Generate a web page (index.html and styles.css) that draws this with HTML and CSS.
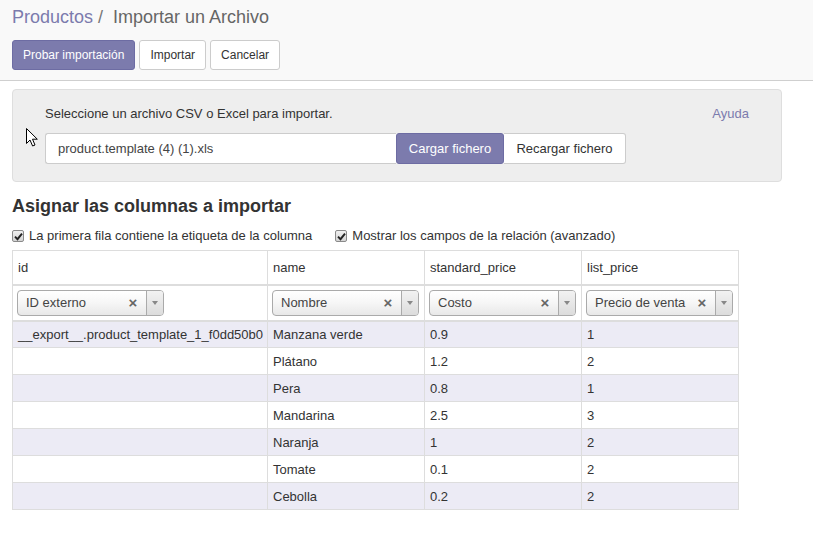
FILE: index.html
```html
<!DOCTYPE html>
<html lang="es">
<head>
<meta charset="utf-8">
<title>Importar un Archivo</title>
<link rel="stylesheet" href="styles.css">
</head>
<body>
<div class="control-panel">
  <div class="breadcrumb"><a class="crumb-link">Productos</a><span class="sep">/</span><span class="crumb-active">Importar un Archivo</span></div>
  <div class="cp-buttons">
    <button class="btn btn-primary">Probar importación</button>
    <button class="btn btn-default">Importar</button>
    <button class="btn btn-default">Cancelar</button>
  </div>
</div>

<div class="content">
  <div class="file-box">
    <svg class="cursor" width="14" height="21" viewBox="0 0 14 21"><path d="M1.5 1.5 L1.5 16.5 L5 13 L7.6 19 L10 18 L7.5 12.2 L12.3 12.2 Z" fill="#fff" stroke="#000" stroke-width="1" stroke-linejoin="miter"/></svg>
    <div class="file-top">
      <span class="file-label">Seleccione un archivo CSV o Excel para importar.</span>
      <a class="help">Ayuda</a>
    </div>
    <div class="file-row">
      <div class="file-input">product.template (4) (1).xls</div>
      <button class="btn btn-primary btn-load">Cargar fichero</button>
      <button class="btn btn-default btn-reload">Recargar fichero</button>
    </div>
  </div>

  <h2 class="title">Asignar las columnas a importar</h2>
  <div class="options">
    <label class="opt"><span class="chk"><svg width="9" height="9" viewBox="0 0 9 9"><path d="M1 4.6 L3.5 7.2 L8 1.6" fill="none" stroke="#222" stroke-width="1.9"/></svg></span>La primera fila contiene la etiqueta de la columna</label>
    <label class="opt opt2"><span class="chk"><svg width="9" height="9" viewBox="0 0 9 9"><path d="M1 4.6 L3.5 7.2 L8 1.6" fill="none" stroke="#222" stroke-width="1.9"/></svg></span>Mostrar los campos de la relación (avanzado)</label>
  </div>

  <table class="preview">
    <colgroup><col class="c1"><col class="c2"><col class="c2"><col class="c2"></colgroup>
    <thead>
      <tr class="names"><th>id</th><th>name</th><th>standard_price</th><th>list_price</th></tr>
      <tr class="fields">
        <th><div class="s2"><span class="s2-text">ID externo</span><span class="s2-x">×</span><span class="s2-arrow"><i></i></span></div></th>
        <th><div class="s2"><span class="s2-text">Nombre</span><span class="s2-x">×</span><span class="s2-arrow"><i></i></span></div></th>
        <th><div class="s2"><span class="s2-text">Costo</span><span class="s2-x">×</span><span class="s2-arrow"><i></i></span></div></th>
        <th><div class="s2"><span class="s2-text">Precio de venta</span><span class="s2-x">×</span><span class="s2-arrow"><i></i></span></div></th>
      </tr>
    </thead>
    <tbody>
      <tr><td>__export__.product_template_1_f0dd50b0</td><td>Manzana verde</td><td>0.9</td><td>1</td></tr>
      <tr><td></td><td>Plátano</td><td>1.2</td><td>2</td></tr>
      <tr><td></td><td>Pera</td><td>0.8</td><td>1</td></tr>
      <tr><td></td><td>Mandarina</td><td>2.5</td><td>3</td></tr>
      <tr><td></td><td>Naranja</td><td>1</td><td>2</td></tr>
      <tr><td></td><td>Tomate</td><td>0.1</td><td>2</td></tr>
      <tr><td></td><td>Cebolla</td><td>0.2</td><td>2</td></tr>
    </tbody>
  </table>
</div>
</body>
</html>
```

FILE: styles.css
```css
* { box-sizing: border-box; }
body {
  margin: 0;
  font-family: "Liberation Sans", Arial, sans-serif;
  font-size: 13px;
  color: #333;
  background: #fff;
}
.control-panel {
  background: #f9f9f9;
  border-bottom: 1px solid #cfcfcf;
  padding: 5px 12px 10px;
}
.breadcrumb {
  font-size: 18px;
  line-height: 25px;
  height: 25px;
}
.crumb-link { color: #7c7bad; }
.sep { color: #777; margin: 0 10px 0 5px; }
.crumb-active { color: #666; }
.cp-buttons {
  margin-top: 10px;
  display: flex;
  gap: 4px;
}
.btn {
  font-family: inherit;
  font-size: 12px;
  line-height: 18px;
  height: 30px;
  padding: 5px 10px;
  border: 1px solid #ccc;
  border-radius: 3px;
  background: #fff;
  color: #333;
  margin: 0;
}
.btn-primary {
  background: #7c7bad;
  border-color: #6d6ca3;
  color: #fff;
}
.content {
  padding: 8px 12px 0;
}
.file-box {
  position: relative;
  width: 770px;
  background: #eeeeee;
  border: 1px solid #dedede;
  border-radius: 4px;
  padding: 15px 32px 17px;
}
.cursor {
  position: absolute;
  left: 12px;
  top: 37px;
}
.file-top {
  display: flex;
  justify-content: space-between;
  line-height: 18px;
}
.help { color: #7c7bad; }
.file-row {
  margin-top: 10px;
  display: flex;
  height: 31px;
}
.file-input {
  width: 351px;
  height: 31px;
  background: #fff;
  border: 1px solid #ccc;
  border-right: none;
  border-radius: 3px 0 0 3px;
  padding: 0 12px;
  line-height: 29px;
  font-size: 13px;
  color: #444;
}
.btn-load {
  width: 108px;
  height: 31px;
  border-radius: 3px;
  padding: 0;
  font-size: 13px;
}
.btn-reload {
  width: 122px;
  height: 31px;
  padding: 0;
  border-radius: 0 3px 3px 0;
  border-left: none;
  font-size: 13px;
}
.title {
  margin: 13px 0 0;
  font-size: 18px;
  line-height: 22px;
  font-weight: bold;
  color: #333;
}
.options {
  margin-top: 10px;
  display: flex;
  line-height: 18px;
  height: 18px;
  color: #333;
}
.opt {
  display: flex;
  align-items: center;
}
.opt2 { margin-left: 23px; }
.chk {
  width: 12px;
  height: 12px;
  border: 1px solid #8a8a8a;
  border-radius: 2px;
  background: linear-gradient(#f0f0f0, #d4d4d4);
  display: inline-flex;
  align-items: center;
  justify-content: center;
  margin-right: 5px;
}
.chk svg { display: block; }
.preview {
  margin-top: 5px;
  width: 726px;
  table-layout: fixed;
  border-collapse: collapse;
  border: 1px solid #ddd;
}
.c1 { width: 255px; }
.c2 { width: 157px; }
.preview th, .preview td {
  border: 1px solid #ddd;
  padding: 0 5px;
  text-align: left;
  font-weight: normal;
  white-space: nowrap;
  overflow: hidden;
}
.preview thead th {
  border-bottom: 2px solid #ddd;
}
.names th { height: 34px; }
.fields th { height: 36px; padding: 0 4px; }
.preview td { height: 27px; }
.preview tbody tr:nth-child(odd) td { background: #ecebf5; }
.s2 {
  width: 147px;
  height: 26px;
  border: 1px solid #aaa;
  border-radius: 4px;
  background: linear-gradient(#ffffff 0%, #f6f6f6 50%, #e8e8e8 100%);
  display: flex;
  align-items: center;
  color: #444;
  position: relative;
  overflow: hidden;
}
.s2-text {
  flex: 1;
  padding-left: 8px;
  line-height: 24px;
  overflow: hidden;
}
.s2-x {
  width: 14px;
  font-size: 15px;
  font-weight: bold;
  color: #666;
  line-height: 24px;
  text-align: center;
  margin-right: 6px;
}
.s2-arrow {
  width: 17px;
  height: 24px;
  border-left: 1px solid #aaa;
  background: linear-gradient(#f2f2f2, #dcdcdc);
  display: flex;
  align-items: center;
  justify-content: center;
}
.s2-arrow i {
  width: 0;
  height: 0;
  border-left: 3px solid transparent;
  border-right: 3px solid transparent;
  border-top: 4px solid #888;
}
```
